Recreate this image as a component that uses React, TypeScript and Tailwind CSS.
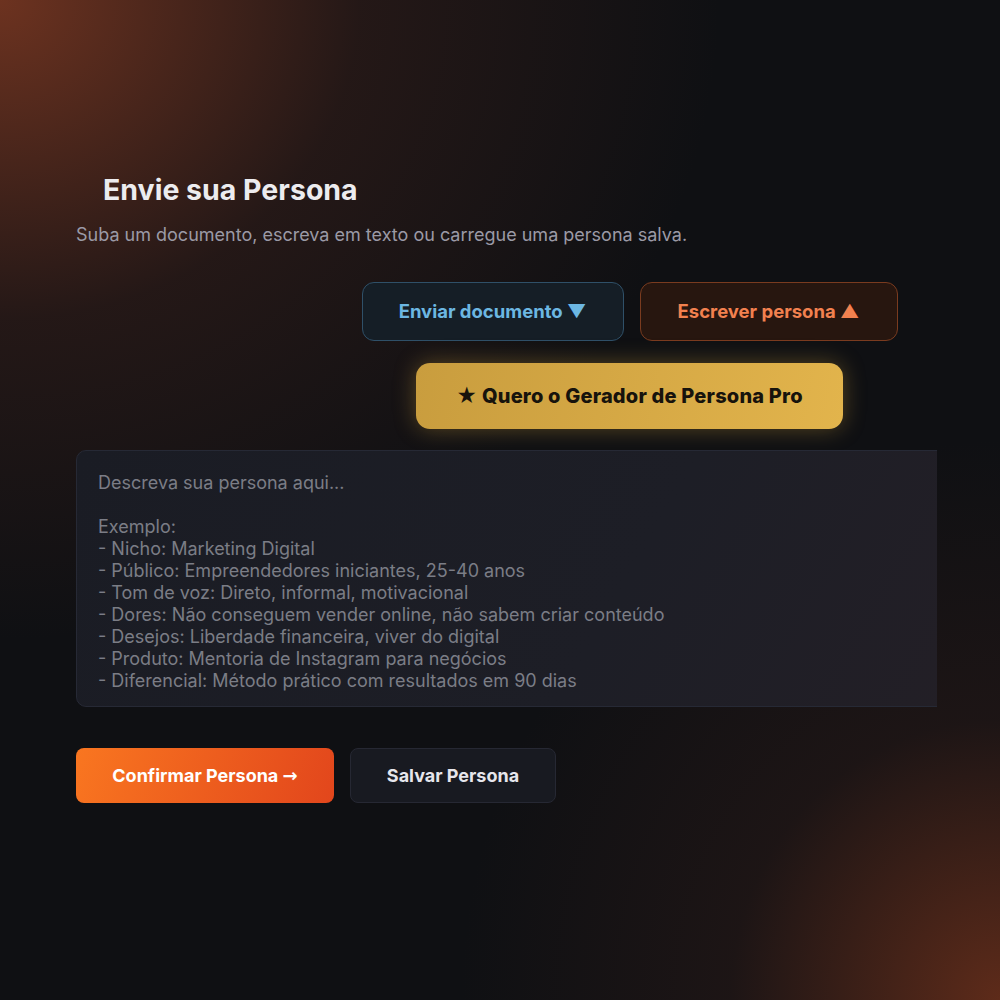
import React from "react";

const lines = [
  "Descreva sua persona aqui...",
  "",
  "Exemplo:",
  "- Nicho: Marketing Digital",
  "- Público: Empreendedores iniciantes, 25-40 anos",
  "- Tom de voz: Direto, informal, motivacional",
  "- Dores: Não conseguem vender online, não sabem criar conteúdo",
  "- Desejos: Liberdade financeira, viver do digital",
  "- Produto: Mentoria de Instagram para negócios",
  "- Diferencial: Método prático com resultados em 90 dias",
];

export default function App() {
  return (
    <div
      className="w-[1000px] h-[1000px] overflow-hidden bg-[#0f1013] bg-[image:radial-gradient(ellipse_720px_640px_at_0%_0%,rgba(140,62,36,0.75),rgba(80,40,30,0.32)_50%,transparent_100%),radial-gradient(ellipse_540px_560px_at_100%_100%,rgba(120,52,28,0.75),rgba(60,32,26,0.3)_50%,transparent_100%)]"
      style={{ fontFamily: "Inter, 'Noto Sans', sans-serif" }}
    >
      <div className="pl-[76px] pt-[171px] flex flex-col">
        <h1 className="pl-[27px] text-[28.5px] leading-[38px] font-bold text-[#ececef]">
          Envie sua Persona
        </h1>
        <p className="mt-[14px] text-[18px] leading-[24px] text-[#9b9aa6]">
          Suba um documento, escreva em texto ou carregue uma persona salva.
        </p>

        <div className="mt-[35px] ml-[286px] w-[535px] flex flex-col items-center">
          <div className="flex gap-[16px]">
            <button className="w-[262px] h-[59px] rounded-[12px] border border-[#2f5068] bg-[#151e26] text-[18.5px] font-bold text-[#6cb7e2]">
              Enviar documento ▼
            </button>
            <button className="w-[258px] h-[59px] rounded-[12px] border border-[#7a3b1f] bg-[#27160f] text-[18.5px] font-bold text-[#f2814f]">
              Escrever persona ▲
            </button>
          </div>
          <button className="mt-[22px] w-[427px] h-[66px] rounded-[14px] bg-[linear-gradient(100deg,#c99d3e,#e2b44c)] text-[20px] tracking-[0.2px] font-extrabold text-[#17130c] shadow-[0_0_22px_rgba(220,170,60,0.35)]">
            ★ Quero o Gerador de Persona Pro
          </button>
        </div>

        <div className="mt-[21px] w-[861px] overflow-hidden">
          <div className="w-[900px] h-[257px] rounded-[10px] border border-[#262935] bg-[linear-gradient(120deg,#1a1c24,#1d1e26_60%,#231f26)] pl-[21px] pt-[21px]">
            {lines.map((l, i) => (
              <div key={i} className="text-[18px] leading-[22px] h-[22px] text-[#7b7d86]">
                {l}
              </div>
            ))}
          </div>
        </div>

        <div className="mt-[41px] flex gap-[16px]">
          <button className="w-[258px] h-[55px] rounded-[8px] bg-[linear-gradient(110deg,#f97620,#e2461c)] text-[18px] font-bold text-white">
            Confirmar Persona{" "}
            <span style={{ fontFamily: "'DejaVu Sans', sans-serif" }} className="font-bold">→</span>
          </button>
          <button className="w-[206px] h-[55px] rounded-[8px] border border-[#262833] bg-[#181a21] text-[18px] font-bold text-[#e6e6ec]">
            Salvar Persona
          </button>
        </div>
      </div>
    </div>
  );
}
